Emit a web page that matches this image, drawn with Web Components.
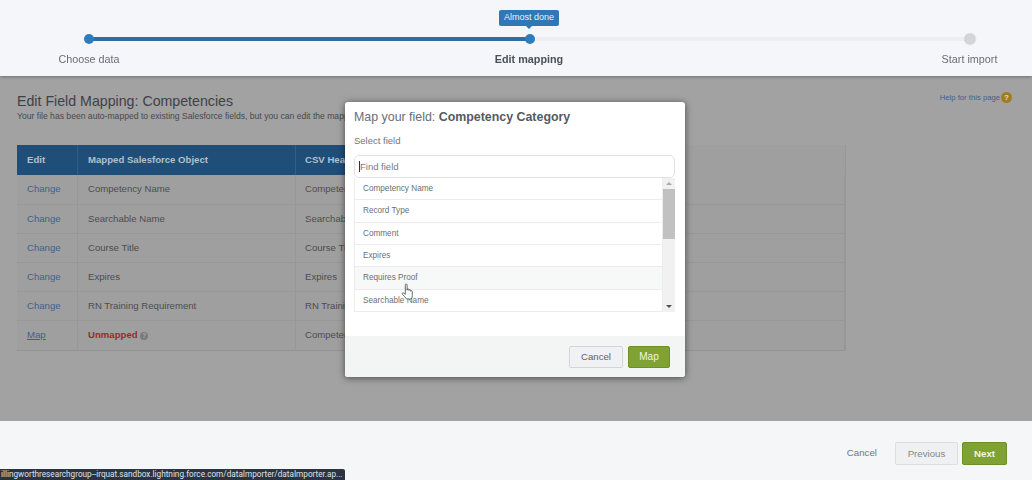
<!DOCTYPE html>
<html>
<head>
<meta charset="utf-8">
<title>Edit Field Mapping</title>
<style>
  html, body { margin: 0; height: 100%; overflow: hidden; }
  body { font-family: "Liberation Sans", Arial, sans-serif; background: #f4f6f8; }
  #page { display: flex; flex-direction: column; height: 480px; position: relative; filter: blur(.35px); }
</style>
</head>
<body>
<div id="page">
  <import-wizard current="Edit mapping" tip="Almost done"></import-wizard>
  <mapping-page>
    <mapping-row edit="Change" field="Competency Name" csv="Competency Name"></mapping-row>
    <mapping-row edit="Change" field="Searchable Name" csv="Searchable Name"></mapping-row>
    <mapping-row edit="Change" field="Course Title" csv="Course Title"></mapping-row>
    <mapping-row edit="Change" field="Expires" csv="Expires"></mapping-row>
    <mapping-row edit="Change" field="RN Training Requirement" csv="RN Training Requirement"></mapping-row>
    <mapping-row edit="Map" unmapped csv="Competency Category"></mapping-row>
  </mapping-page>
  <wizard-footer></wizard-footer>
  <map-dialog field="Competency Category">
    <field-option>Competency Name</field-option>
    <field-option>Record Type</field-option>
    <field-option>Comment</field-option>
    <field-option>Expires</field-option>
    <field-option hover>Requires Proof</field-option>
    <field-option>Searchable Name</field-option>
  </map-dialog>
  <status-tip>illingworthresearchgroup--irquat.sandbox.lightning.force.com/dataImporter/dataImporter.ap...</status-tip>
</div>

<script>
class importWizard extends HTMLElement {
  constructor() {
    super();
    this._shadowRoot = this.attachShadow({ mode: "open" });
    const current = this.getAttribute("current");
    const tip = this.getAttribute("tip");
    this._shadowRoot.innerHTML = `
    <style>
      :host { display: block; height: 76px; background: #f4f6f9; position: relative; z-index: 1; box-shadow: 0 1px 3px rgba(0,0,0,.3); }
      .track { position: relative; height: 76px; padding: 0 63px 0 89px; }
      .line { display: flex; padding-top: 37px; }
      .line i { display: block; flex: 1; height: 4px; }
      .done { background: #2f6ea3; }
      .todo { background: #eceef0; }
      .stop { position: absolute; top: 34px; width: 10px; height: 10px; margin-left: -5px; border-radius: 50%; background: #2d7cbd; }
      .stop.off { background: #d3d5d6; box-shadow: 0 0 2px #999; }
      .label { position: absolute; top: 52px; width: 120px; margin-left: -60px; text-align: center; font-size: 10.8px; line-height: 14px; color: #6a6e73; }
      .label.on { font-weight: 700; color: #4b5059; }
      .tip { position: absolute; left: 499px; top: 10px; width: 60px; height: 16px; line-height: 15px; background: #2f78b5; color: #e8f1f8; font-size: 9px; text-align: center; border-radius: 2px; }
      .tip::after { content: ""; position: absolute; left: 27px; top: 16px; border: 3px solid transparent; border-top-color: #2f78b5; border-bottom: 0; }
    </style>
    <div class="track">
      <div class="line"><i class="done"></i><i class="todo"></i></div>
      <span class="stop" style="left:89px"></span>
      <span class="stop" style="left:529.5px"></span>
      <span class="stop off" style="left:969.5px"></span>
      <span class="label" style="left:89px">Choose data</span>
      <span class="label on" style="left:529px">${current}</span>
      <span class="label" style="left:969.5px">Start import</span>
      <span class="tip">${tip}</span>
    </div>`;
  }
}
customElements.define("import-wizard", importWizard);

class mappingPage extends HTMLElement {
  constructor() {
    super();
    this._shadowRoot = this.attachShadow({ mode: "open" });
    this._shadowRoot.innerHTML = `
    <style>
      :host { display: block; flex: 1; background: #a2a2a2; padding: 17px 20px 0 17px; box-sizing: border-box; overflow: hidden; }
      .top { display: flex; justify-content: space-between; }
      h1 { margin: 0; font-size: 14.2px; line-height: 17px; font-weight: 400; color: #3e4147; }
      p { margin: 1px 0 0; font-size: 8.6px; line-height: 11px; color: #474a4f; white-space: nowrap; }
      .help { display: flex; align-items: center; gap: 1px; height: 12px; margin-top: -2px; font-size: 7.7px; color: #3f6288; }
      .help b { width: 11px; height: 11px; border-radius: 50%; background: #a17c22; color: #e8dcb8; font-size: 8px; line-height: 11px; text-align: center; }
      .table { width: 829px; margin-top: 23px; border-bottom: 1px solid #949494; border-right: 1px solid #979797; box-sizing: border-box; }
      .head { display: grid; grid-template-columns: 61px 218px 1fr; height: 30px; background: #9f9f9f; }
      .head span { display: block; background: #1f4e79; color: #b4c0cc; font-size: 9.6px; font-weight: 700; line-height: 29px; padding-left: 10px; border-right: 1px solid #2e5f8c; }
      .head .last { width: 120px; padding-left: 9px; }
    </style>
    <div class="top">
      <div>
        <h1>Edit Field Mapping: Competencies</h1>
        <p>Your file has been auto-mapped to existing Salesforce fields, but you can edit the mappings below.</p>
      </div>
      <div class="help">Help for this page <b>?</b></div>
    </div>
    <div class="table">
      <div class="head"><span>Edit</span><span>Mapped Salesforce Object</span><span class="last">CSV Header</span></div>
      <slot></slot>
    </div>`;
  }
}
customElements.define("mapping-page", mappingPage);

class mappingRow extends HTMLElement {
  constructor() {
    super();
    this._shadowRoot = this.attachShadow({ mode: "open" });
    const edit = this.getAttribute("edit");
    const unmapped = this.hasAttribute("unmapped");
    const field = unmapped
      ? `<b>Unmapped</b> <i>?</i>`
      : this.getAttribute("field");
    this._shadowRoot.innerHTML = `
    <style>
      :host { display: grid; grid-template-columns: 61px 218px 1fr; height: 29.1px; border-top: 1px solid #979797; box-sizing: border-box; background: #9f9f9f; font-size: 9.6px; line-height: 28px; color: #4d4d4d; }
      :host(:first-of-type) { border-top: 0; }
      div { padding-left: 10px; border-right: 1px solid #979797; white-space: nowrap; overflow: hidden; }
      div:first-child { border-left: 1px solid #979797; padding-left: 9px; }
      div:last-child { padding-left: 9px; }
      a { color: #3f6288; }
      a.map { text-decoration: underline; }
      b { color: #a0282a; }
      i { display: inline-block; width: 8px; height: 8px; border-radius: 50%; background: #7a7a7a; color: #a8a8a8; font: 700 7px/8px "Liberation Sans", sans-serif; text-align: center; }
    </style>
    <div><a class="${unmapped ? "map" : ""}">${edit}</a></div>
    <div>${field}</div>
    <div>${this.getAttribute("csv")}</div>`;
  }
}
customElements.define("mapping-row", mappingRow);

class wizardFooter extends HTMLElement {
  constructor() {
    super();
    this._shadowRoot = this.attachShadow({ mode: "open" });
    this._shadowRoot.innerHTML = `
    <style>
      :host { display: flex; justify-content: flex-end; align-items: flex-start; height: 59px; box-sizing: border-box; padding: 21px 25px 0 0; background: #f4f6f8; font-size: 9.7px; }
      span { display: block; height: 23px; line-height: 22px; box-sizing: border-box; text-align: center; border-radius: 2px; }
      .cancel { color: #73777b; margin-right: 18px; }
      .prev { width: 63px; color: #85888b; background: #eff0f1; border: 1px solid #dcdedf; margin-right: 4px; }
      .next { width: 45px; color: #f1f5e4; font-weight: 700; background: #7fa233; border: 1px solid #6f9029; }
    </style>
    <span class="cancel">Cancel</span>
    <span class="prev">Previous</span>
    <span class="next">Next</span>`;
  }
}
customElements.define("wizard-footer", wizardFooter);

class fieldOption extends HTMLElement {
  constructor() {
    super();
    this._shadowRoot = this.attachShadow({ mode: "open" });
    this._shadowRoot.innerHTML = `
    <style>
      :host { display: block; height: 22.33px; box-sizing: border-box; padding-left: 8px; line-height: 21px; font-size: 8.2px; color: #6b6f76; border-bottom: 1px solid #ececec; background: #fff; }
      :host([hover]) { background: #f7f8f8; }
    </style>
    <slot></slot>`;
  }
}
customElements.define("field-option", fieldOption);

class mapDialog extends HTMLElement {
  constructor() {
    super();
    this._shadowRoot = this.attachShadow({ mode: "open" });
    this._shadowRoot.innerHTML = `
    <style>
      :host { position: absolute; left: 345px; top: 102px; width: 340px; height: 275px; z-index: 2; display: flex; flex-direction: column; background: #fff; border-radius: 3px; box-shadow: 0 1px 7px rgba(0,0,0,.55); overflow: hidden; }
      .body { flex: 1; padding: 7px 10px 0 9px; position: relative; }
      h2 { margin: 0; font-size: 12.4px; line-height: 16px; font-weight: 400; color: #6a6e74; }
      h2 b { color: #555a62; }
      label { display: block; margin-top: 10px; font-size: 9.5px; line-height: 12px; color: #72767b; }
      .find { height: 23px; margin-top: 8px; box-sizing: border-box; border: 1px solid #dfe1e3; border-radius: 5px; padding-left: 4px; font-size: 9.5px; line-height: 21px; color: #777b80; }
      .find::before { content: ""; display: inline-block; width: 1px; height: 11px; background: #333; vertical-align: -2px; }
      .list { display: flex; height: 134px; }
      .items { flex: 1; border-left: 1px solid #ececec; border-right: 1px solid #ececec; overflow: hidden; }
      .bar { width: 12px; background: #f1f1f1; display: flex; flex-direction: column; align-items: center; }
      .bar .up, .bar .down { width: 0; border: 3px solid transparent; margin: 4px 0; }
      .bar .up { border-bottom-color: #a9a9a9; border-top: 0; }
      .bar .down { border-top-color: #505050; border-bottom: 0; }
      .bar .thumb { width: 100%; height: 50px; background: #c1c1c1; }
      .bar .gap { flex: 1; }
      .foot { height: 41px; box-sizing: border-box; background: #f3f5f5; display: flex; justify-content: flex-end; align-items: flex-start; gap: 5px; padding: 10px 15px 0 0; font-size: 9.6px; }
      .foot span { display: block; height: 22px; line-height: 20px; box-sizing: border-box; text-align: center; border-radius: 2px; }
      .cancel { width: 54px; color: #5e6266; background: #f0f1f2; border: 1px solid #d3d5d7; }
      .map { width: 42px; color: #f1f5e4; font-size: 10px; background: #7fa233; border: 1px solid #6f9029; }
      svg { position: absolute; left: 55px; top: 181px; }
    </style>
    <div class="body">
      <h2>Map your field: <b>${this.getAttribute("field")}</b></h2>
      <label>Select field</label>
      <div class="find">Find field</div>
      <div class="list">
        <div class="items"><slot></slot></div>
        <div class="bar"><i class="up"></i><i class="thumb"></i><i class="gap"></i><i class="down"></i></div>
      </div>
      <svg width="16" height="18" viewBox="0 0 14 18"><path d="M4.5 1.2c.8-.5 1.6 0 1.6 1v5l.1-1.200c.7-.6 1.500-.3 1.700.5v1l.2-.7c.7-.5 1.400-.2 1.600.6v.8l.2-.4c.7-.4 1.400 0 1.400.9v3.800c0 1.500-.5 2.400-1 3.500H5.500c-1-1.600-2.600-3-4.100-4.800-.5-.8.2-1.600 1-1.300l1.900 1.400V2.200c0-.4.100-.8.200-1z" fill="#fff" stroke="#55585c" stroke-width=".9" stroke-linejoin="round"/></svg>
    </div>
    <div class="foot"><span class="cancel">Cancel</span><span class="map">Map</span></div>`;
  }
}
customElements.define("map-dialog", mapDialog);

class statusTip extends HTMLElement {
  constructor() {
    super();
    this._shadowRoot = this.attachShadow({ mode: "open" });
    this._shadowRoot.innerHTML = `
    <style>
      :host { position: absolute; left: 0; bottom: 0; width: 345px; height: 11px; z-index: 3; box-sizing: border-box; padding-left: 1px; background: #2c3340; color: #dfe3e8; border-top-right-radius: 2px; font: 8.2px/11px Roboto, "Liberation Sans", sans-serif; white-space: nowrap; overflow: hidden; }
    </style>
    <slot></slot>`;
  }
}
customElements.define("status-tip", statusTip);
</script>
</body>
</html>
